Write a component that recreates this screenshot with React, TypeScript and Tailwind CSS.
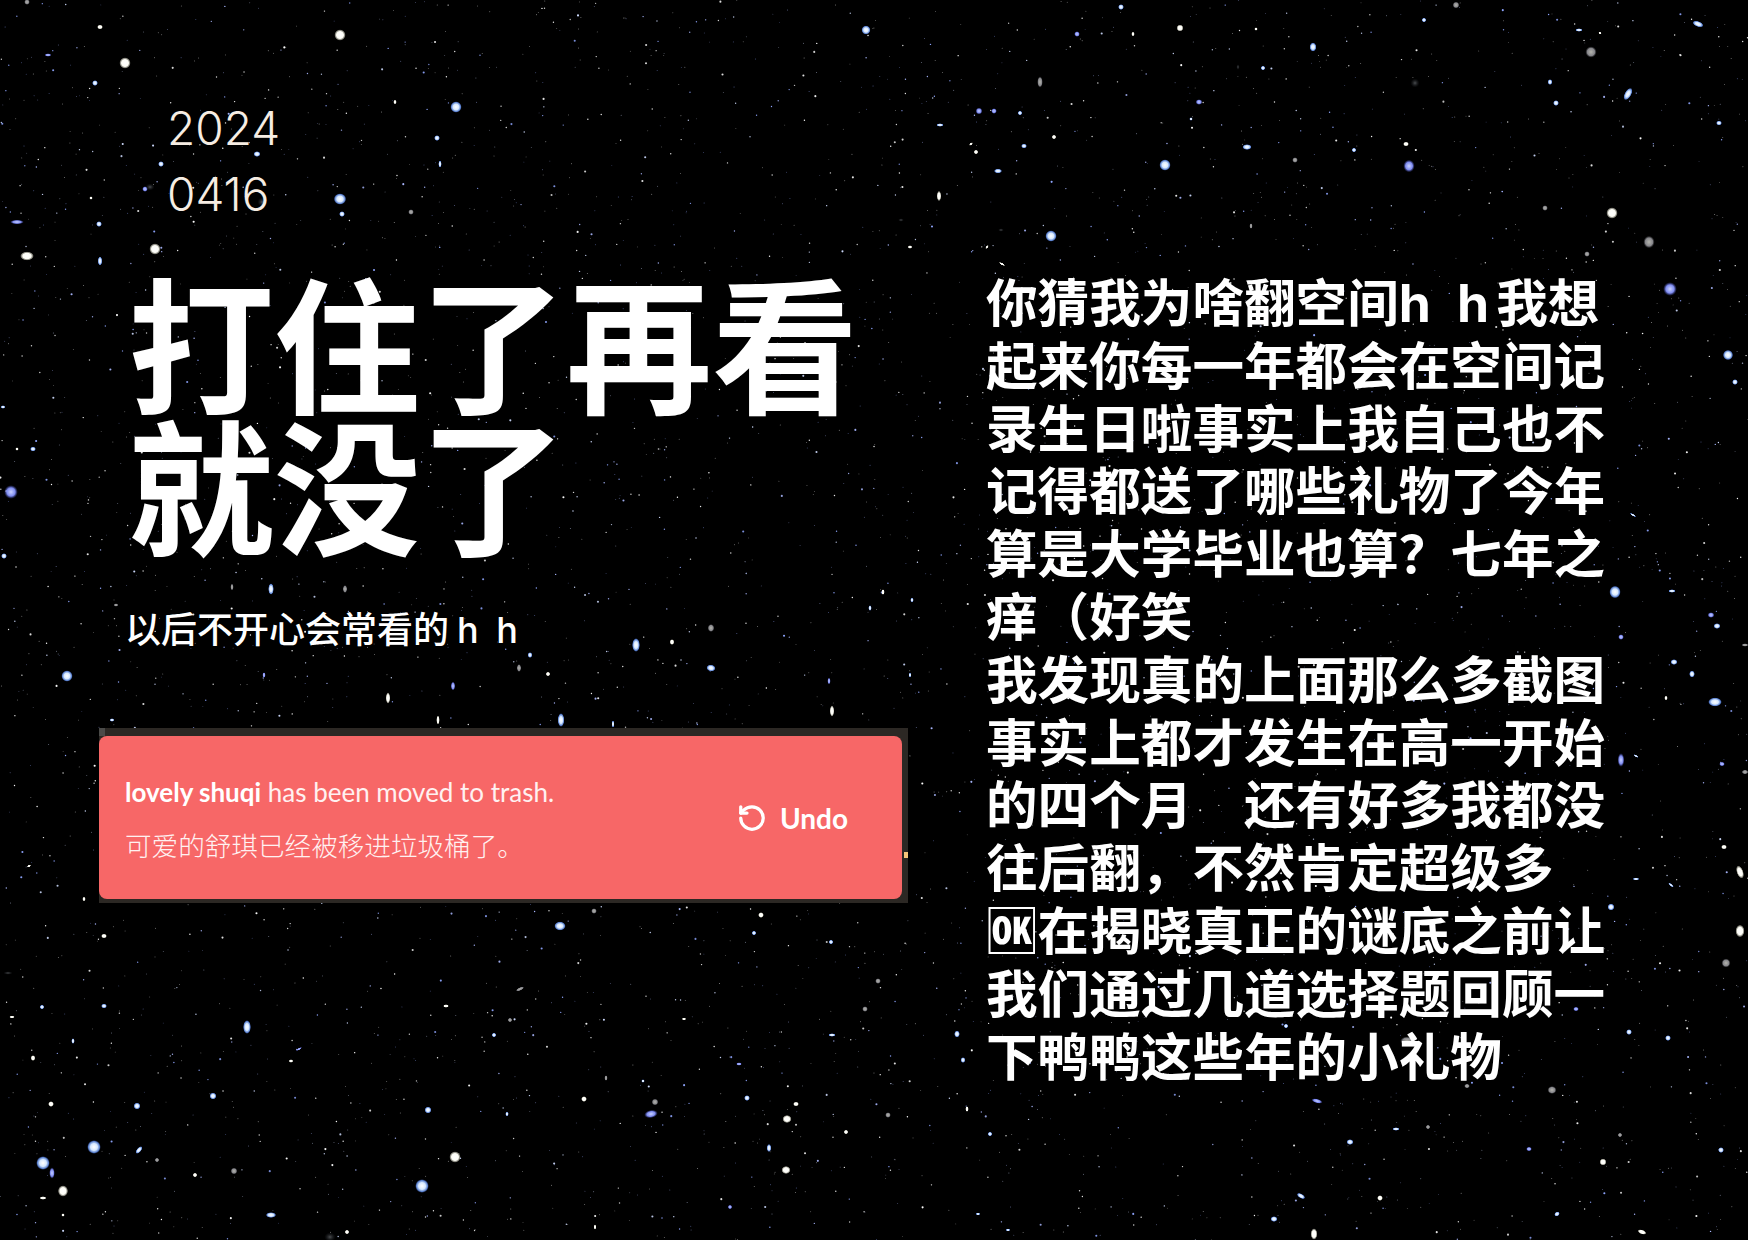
import { RotateCcw } from "lucide-react";

type Star = [number, number, number, number, string, number?];

const STARS: Star[] = [
  [340,35,5,5,"w"],[125,63,5,5,"w"],[100,27,2.5,2,"w"],[95,83,2.5,2.5,"b"],[456,107,5,5,"b"],[437,138,2.5,2.5,"b"],[257,154,3,2.5,"b"],[161,164,2.5,2.5,"b"],[145,189,2.5,2.5,"v"],[150,187,4,3,"d"],[340,199,5.5,5,"b"],[342,214,2.5,2.5,"b"],[411,212,2.5,2.5,"g"],[17,222,6,2,"v"],[99,224,2.5,2.5,"b"],[27,256,6,4,"w"],[155,249,5,5,"w"],[100,261,2,4,"b"],[91,198,1.5,1.5,"w"],[395,102,1.5,2,"w"],[440,164,1.5,3,"b"],[48,55,3,1.5,"v"],[27,2,2.5,2.5,"g"],[262,202,4,4,"d"],
  [866,30,4,4,"b"],[1121,7,2.5,2.5,"b"],[1077,34,2.5,2.5,"v"],[1180,28,3,3,"w"],[1133,34,1.5,2,"w"],[1313,47,3,4,"b"],[1040,82,2.5,5,"g"],[979,111,3,3,"v"],[994,111,2.5,2.5,"v"],[1020,113,2,2,"b"],[940,125,3,1.5,"b"],[1165,165,5,5,"b"],[1247,147,4,2.5,"b"],[1024,146,2.5,2,"b"],[998,171,3.5,2,"b"],[971,144,2,1,"w",-40],[976,152,2,2,"w"],[1054,137,2,2,"w"],[939,196,2,4.5,"w"],[1051,236,5,5,"b"],[1354,150,2,2,"b"],[1295,160,2.5,2.5,"g"],[1251,226,1.5,2.5,"g"],[901,220,2.5,1.5,"d"],[1001,230,2.5,1.5,"d"],[910,247,2,1.5,"w"],[987,247,2,1,"w",-50],[1002,264,3,1,"w",30],[1263,68,2,2,"b"],[1256,29,1.5,1.5,"w"],[1238,67,1.5,2.5,"d"],[1199,102,3,2.5,"v"],[1191,119,1.5,1.5,"b"],
  [1698,24,5,2.5,"b",20],[1591,52,5,5,"g"],[1628,94,3,6,"b",30],[1556,103,2.5,2.5,"b"],[1550,82,2,2.5,"b"],[1579,30,3,1.5,"b"],[1456,5,3,3,"g"],[1409,166,5,5.5,"v"],[1406,144,2.5,2,"w"],[1612,213,5,5,"w"],[1649,242,5,5.5,"g"],[1587,254,2.5,2.5,"g"],[1545,208,2.5,2.5,"g"],[1670,289,6,6,"v"],[1728,355,4.5,4.5,"b"],[1735,382,2.5,2.5,"b"],[1719,123,2.5,2,"b"],[1415,83,4,4,"d"],[1424,20,2,2,"b"],[1600,33,1.5,1,"w",30],
  [560,926,5,4,"b"],[761,915,2.5,2.5,"w"],[754,933,2,2,"b"],[594,911,2.5,2.5,"g"],[831,942,2,2,"b"],[878,981,2.5,2.5,"g"],[865,1009,2.5,2.5,"g"],[520,989,4,1.5,"g",-25],[510,1020,2,2,"g"],[832,1035,3,1.5,"b"],[957,1034,2.5,3,"b"],[963,1060,2,2.5,"b"],[606,1078,1.5,2.5,"g"],[584,1099,2.5,2.5,"w"],[655,1102,3,3,"g"],[651,1114,6,3.5,"v",-10],[747,1098,2.5,2.5,"b"],[796,1104,2.5,2,"w"],[787,1119,4,3.5,"w"],[846,1132,2,2,"w"],[769,1148,2,3.5,"b"],[786,1170,4,3.5,"w"],[888,1115,2.5,2.5,"g"],[967,1109,1.5,2.5,"w"],[990,1134,2,2,"b"],[730,1207,2,2,"v"],[595,1227,1,2.5,"w"],[1008,1230,2,1,"b"],[507,1114,1.5,2,"b"],[978,1214,2,1,"b"],[684,1019,2,1,"w"],[739,1064,2.5,1.5,"v"],[643,1081,1.5,1.5,"b"],
  [247,1027,3.5,6,"b"],[104,1006,2.5,2,"b"],[42,1007,2,2,"b"],[12,1017,2.5,1,"w"],[73,1041,1.5,2.5,"b"],[33,1058,2,2.5,"w"],[51,1104,2.5,2.5,"w"],[137,1106,3,3,"b"],[94,1147,6,6,"b"],[43,1163,6,6,"b"],[52,1173,2.5,5,"v"],[63,1191,4.5,5,"w"],[43,1198,3,1.5,"w"],[213,1096,3,3,"b"],[139,1150,2,4,"b",40],[234,1171,3,3,"g"],[195,1175,2,2,"w"],[428,1110,3,3,"b"],[455,1157,5,5,"w"],[422,1186,6,6,"b"],[271,1215,4.5,2.5,"b"],[330,1237,5,4,"d"],[291,1061,2,1.5,"w"],[347,1232,2,2,"w"],[446,1006,2.5,1.5,"w"],[299,1049,3,1,"v",-30],[494,1035,2,2,"b"],[157,1160,2,2,"g"],[63,1215,1.5,1.5,"w"],
  [1629,1032,2.5,2.5,"b"],[1668,1038,2.5,2.5,"b"],[1552,1090,4,3.5,"g"],[1467,1086,2.5,2,"g"],[1407,1041,6,4,"g"],[1317,1101,5,2,"v",15],[1428,1127,2,2,"g"],[1396,1129,3,1.5,"b"],[1350,1142,3,2.5,"b"],[1529,1149,2.5,2,"v"],[1603,1162,3,3,"w"],[1721,1150,2.5,2.5,"b"],[1301,1196,4,2,"b",30],[1380,1198,2.5,2.5,"w"],[1274,1219,3,2.5,"b"],[1314,1234,3,5,"w"],[1557,1214,2.5,2,"b",-30],[1642,1232,4,2,"w",20],[1576,1009,2.5,2,"v"],[1620,1135,2,2,"g"],[1286,1026,2,2,"b"],
  [11,492,6,6,"v"],[67,676,5,5,"b"],[4,556,2.5,2.5,"b"],[33,449,2.5,2,"b"],[104,936,2.5,2,"w"],[84,899,1.5,2,"w"],[29,866,2,1,"w",-30],[116,605,2,1.5,"g"],[8,973,4,1.5,"d"],[17,449,1.5,1.5,"w"],[3,407,2,1.5,"b"],[112,720,2,1.5,"b"],
  [1615,592,5,5.5,"b"],[1672,591,3,1.5,"b"],[1711,615,3,2.5,"v"],[1717,626,3,2.5,"b"],[1621,637,2.5,2.5,"v"],[1674,662,3,2.5,"b"],[1692,674,2.5,3,"b"],[1715,702,6,4,"b"],[1666,698,1.5,2,"w"],[1621,760,3,6,"v"],[1636,756,2.5,1,"b",30],[1722,764,2.5,2,"v"],[1724,847,2.5,2,"w"],[1740,872,3,6,"w",-20],[1671,885,3,1,"b",40],[1636,879,3,1,"b"],[1611,907,3,3,"b"],[1740,931,4,5.5,"w"],[1726,963,4,4,"g"],[1745,772,3,2,"g"],[1633,515,3,1,"b",30],[1745,645,3,1.5,"g"],
  [271,589,2.5,5,"b"],[345,589,2,3.5,"g"],[232,587,1.5,3,"g"],[636,645,3.5,6,"b"],[711,628,3,3.5,"g"],[711,668,4,3,"b",10],[672,642,2,2.5,"w"],[883,592,1.5,2.5,"w"],[870,608,1.5,2.5,"b"],[519,668,2,3.5,"g"],[530,655,2,2.5,"b"],[453,686,2,4,"v"],[388,698,2,5,"w"],[438,720,1.5,4,"w"],[561,720,3,6,"b"],[832,711,2,5,"w"],[613,724,1.2,3,"b"],[264,675,1.5,2.5,"v"],[829,681,1.5,3,"v"],[548,674,2,2,"w"],[912,600,1.5,2,"b"],[910,675,1.2,2,"b"],
];

const KIND: Record<string, string> = { w: "url(#sw)", b: "url(#sb)", v: "url(#sv)", g: "url(#sg)", d: "url(#sd)" };

function makeDust() {
  let s = 20240416;
  const r = () => {
    s = (s * 1664525 + 1013904223) >>> 0;
    return s / 4294967296;
  };
  const out: { x: number; y: number; r: number; c: string; o: number }[] = [];
  const blues = ["#ffffff", "#ffffff", "#cfdcff", "#aab8ff", "#8fa6ff", "#e8e8e8"];
  for (let i = 0; i < 5200; i++) {
    const t = r();
    out.push({
      x: r() * 1748,
      y: r() * 1240,
      r: t < 0.62 ? 0.45 : t < 0.93 ? 0.7 : 1.05,
      c: blues[Math.floor(r() * blues.length)],
      o: t < 0.62 ? 0.55 + r() * 0.3 : 0.8 + r() * 0.2,
    });
  }
  return out;
}
const DUST = makeDust();

function Sky() {
  return (
    <svg className="absolute inset-0" width={1748} height={1240} viewBox="0 0 1748 1240">
      <defs>
        <radialGradient id="sw">
          <stop offset="0%" stopColor="#ffffff" />
          <stop offset="60%" stopColor="#fdfdf6" />
          <stop offset="85%" stopColor="#a9a89c" stopOpacity="0.7" />
          <stop offset="100%" stopColor="#6b6b60" stopOpacity="0" />
        </radialGradient>
        <radialGradient id="sb">
          <stop offset="0%" stopColor="#ffffff" />
          <stop offset="50%" stopColor="#d6e8ff" />
          <stop offset="80%" stopColor="#6f9cf5" stopOpacity="0.85" />
          <stop offset="100%" stopColor="#3a5cc0" stopOpacity="0" />
        </radialGradient>
        <radialGradient id="sv">
          <stop offset="0%" stopColor="#c9d2ff" />
          <stop offset="60%" stopColor="#7f8cf0" />
          <stop offset="100%" stopColor="#3c44a8" stopOpacity="0" />
        </radialGradient>
        <radialGradient id="sg">
          <stop offset="0%" stopColor="#b5b5ae" />
          <stop offset="65%" stopColor="#85858a" />
          <stop offset="100%" stopColor="#3c3c40" stopOpacity="0" />
        </radialGradient>
        <radialGradient id="sd">
          <stop offset="0%" stopColor="#4c4f52" />
          <stop offset="100%" stopColor="#1c1e22" stopOpacity="0" />
        </radialGradient>
      </defs>
      {DUST.map((d, i) => (
        <circle key={i} cx={d.x} cy={d.y} r={d.r} fill={d.c} opacity={d.o} />
      ))}
      {STARS.map(([x, y, rx, ry, k, rot], i) => (
        <ellipse
          key={i}
          cx={x}
          cy={y}
          rx={rx * 1.15}
          ry={ry * 1.15}
          fill={KIND[k]}
          transform={rot ? `rotate(${rot} ${x} ${y})` : undefined}
        />
      ))}
    </svg>
  );
}

const CJK = "font-['Inter','Noto_Sans_CJK_SC',sans-serif]";

const LINES = [
  <>你猜我为啥翻空间<span className="tracking-[7px]">h h</span>我想</>,
  "起来你每一年都会在空间记",
  "录生日啦事实上我自己也不",
  "记得都送了哪些礼物了今年",
  "算是大学毕业也算？七年之",
  "痒（好笑",
  "我发现真的上面那么多截图",
  "事实上都才发生在高一开始",
  "的四个月　还有好多我都没",
  "往后翻，不然肯定超级多",
  "🆗在揭晓真正的谜底之前让",
  "我们通过几道选择题回顾一",
  "下鸭鸭这些年的小礼物",
];

export default function App() {
  return (
    <div className={`relative w-[1748px] h-[1240px] overflow-hidden bg-black text-white ${CJK}`}>
      <Sky />
      <div className="relative flex">
        <div className="w-[887px] pt-[95px] pl-[99px] shrink-0">
          <div className="pl-[68px] text-[46px] leading-[66px] font-light text-[#f6ede3]">
            <div>2024</div>
            <div>0416</div>
          </div>
          <h1 className="mt-[51px] pl-[29px] text-[146px] leading-[142px] font-bold whitespace-nowrap">
            打住了再看
            <br />
            就没了
          </h1>
          <p className="mt-[44px] pl-[26px] text-[36px] leading-[48px] font-medium whitespace-nowrap">
            以后不开心会常看的<span className="ml-[8px] tracking-[4px]">h h</span>
          </p>
          <div className="relative mt-[74px] w-[809px] h-[175px] pt-[8px] pr-[6px] pb-[4px] bg-[#2c2824]">
            <div className="absolute left-0 top-0 w-[6px] h-[8px] bg-[#4a4a48]" />
            <div className="absolute right-0 top-[124px] w-[4px] h-[6px] bg-[#f6c67a]" />
            <div className="flex items-center justify-between h-full rounded-[8px] bg-[#f76767] pl-[26px] pr-[54px]">
              <div className="flex flex-col gap-[22px] pt-[3px]">
                <div className="font-['Lato','Noto_Sans_CJK_SC',sans-serif] text-[26px] leading-[32px] whitespace-nowrap text-[#fff1f1]">
                  <span className="font-bold text-white">lovely shuqi</span> has been moved to trash.
                </div>
                <div className="text-[26.6px] leading-[32px] font-light whitespace-nowrap text-[#fff1f1]">
                  可爱的舒琪已经被移进垃圾桶了。
                </div>
              </div>
              <div className="flex items-center gap-[13px]">
                <RotateCcw size={30} strokeWidth={2.6} />
                <span className="font-['Lato',sans-serif] text-[28px] leading-[34px] font-bold">Undo</span>
              </div>
            </div>
          </div>
        </div>
        <div className="pl-[99px] pt-[272px] text-[51.6px] leading-[62.8px] font-bold whitespace-nowrap">
          {LINES.map((l, i) => (
            <div key={i}>{l}</div>
          ))}
        </div>
      </div>
    </div>
  );
}
